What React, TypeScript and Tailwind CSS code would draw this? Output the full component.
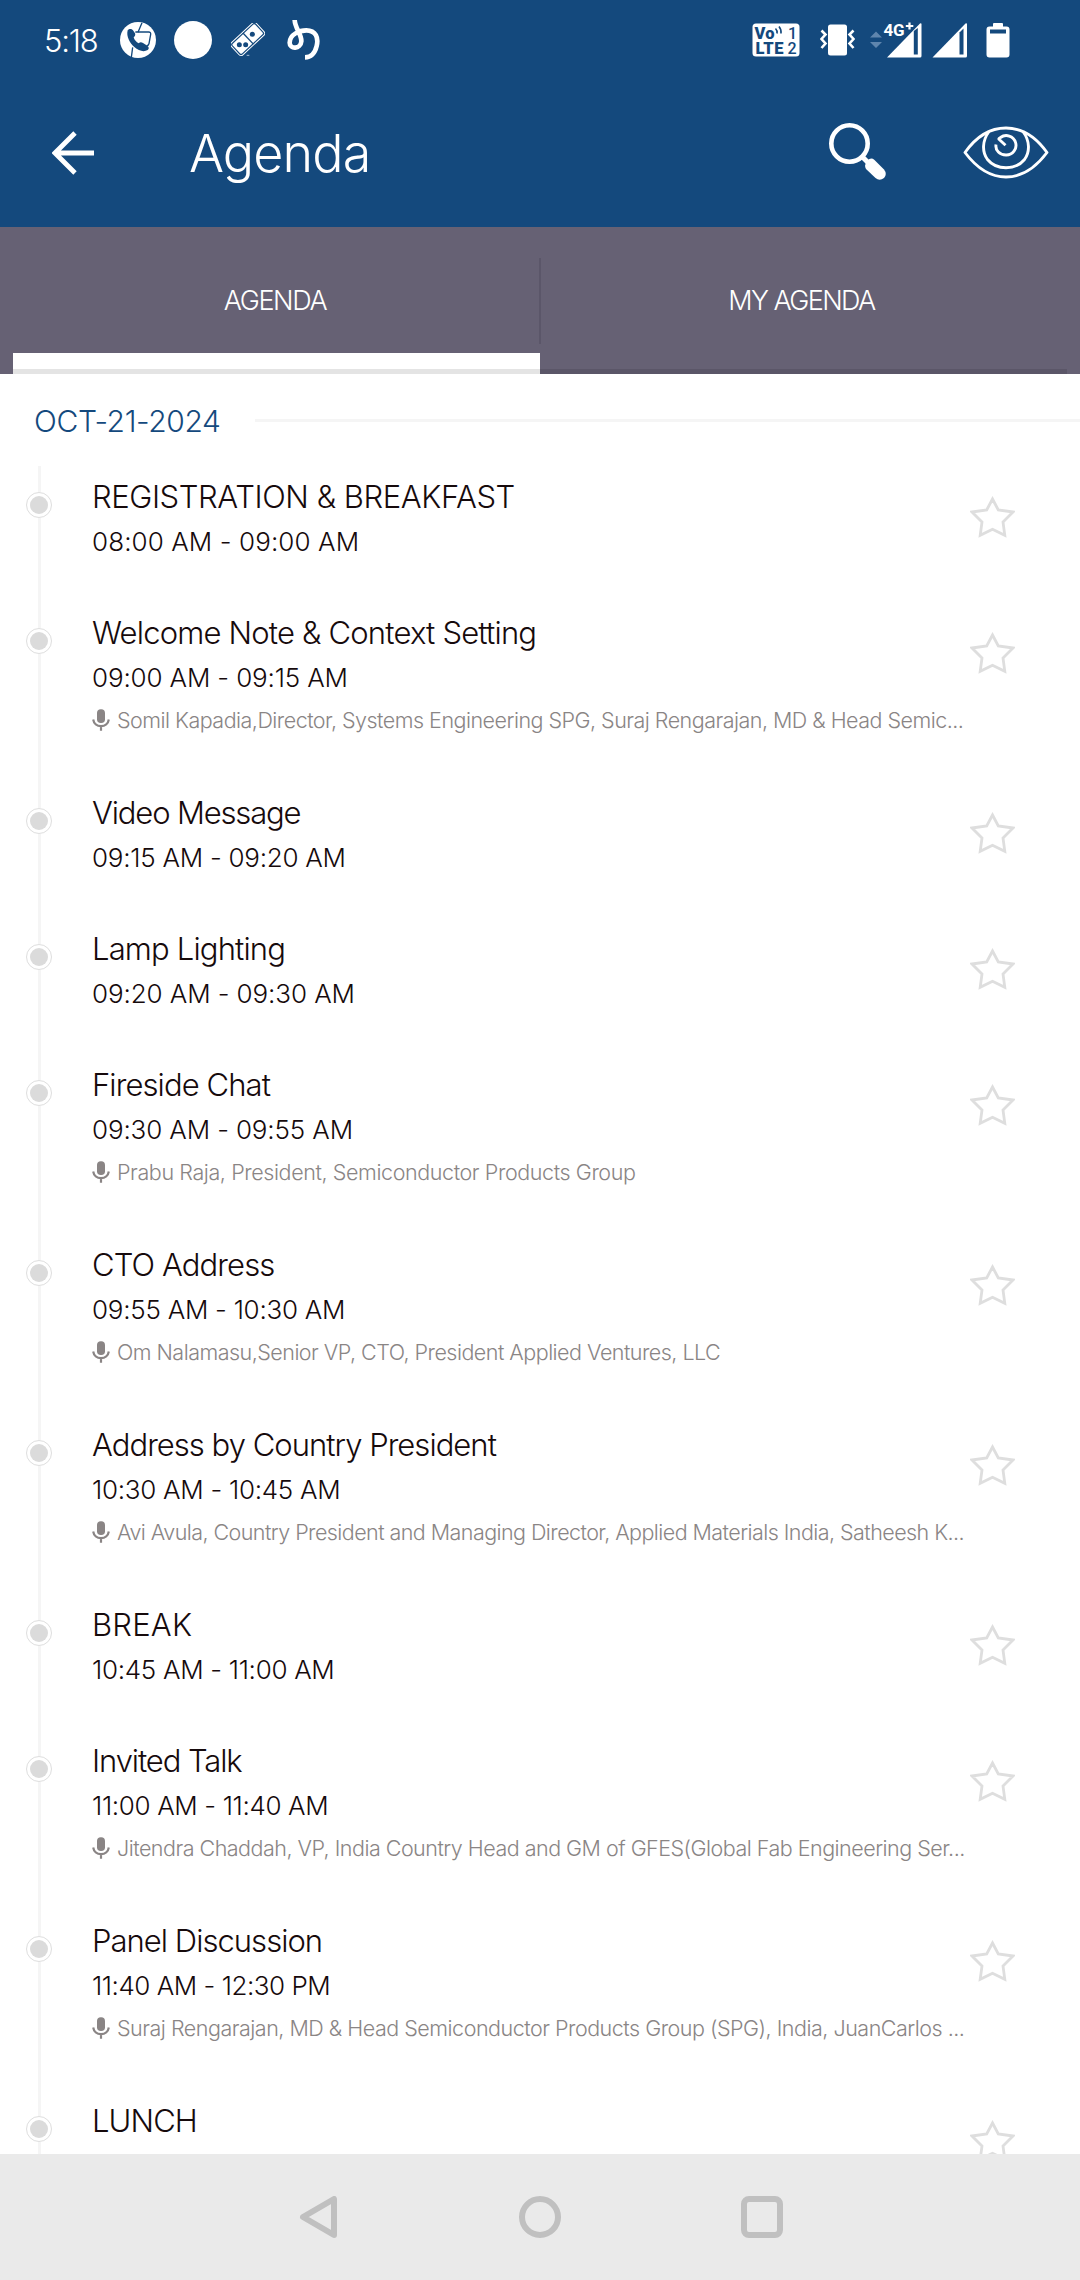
type Session = {
  title: string;
  titleTracking: string;
  time?: string;
  timeTracking?: string;
  speakers?: string;
  speakersTracking?: string;
};

const sessions: Session[] = [
  { title: 'REGISTRATION & BREAKFAST', titleTracking: 'tracking-[-0.42px]', time: '08:00 AM - 09:00 AM', timeTracking: 'tracking-[0.09px]' },
  {
    title: 'Welcome Note & Context Setting',
    titleTracking: 'tracking-[-0.81px]',
    time: '09:00 AM - 09:15 AM',
    timeTracking: 'tracking-[-0.15px]',
    speakers: 'Somil Kapadia,Director, Systems Engineering SPG, Suraj Rengarajan, MD & Head Semic...',
    speakersTracking: 'tracking-[-0.52px]',
  },
  { title: 'Video Message', titleTracking: 'tracking-[-1.15px]', time: '09:15 AM - 09:20 AM', timeTracking: 'tracking-[-0.26px]' },
  { title: 'Lamp Lighting', titleTracking: 'tracking-[-0.84px]', time: '09:20 AM - 09:30 AM', timeTracking: 'tracking-[-0.1px]' },
  {
    title: 'Fireside Chat',
    titleTracking: 'tracking-[-0.9px]',
    time: '09:30 AM - 09:55 AM',
    timeTracking: 'tracking-[-0.14px]',
    speakers: 'Prabu Raja, President, Semiconductor Products Group',
    speakersTracking: 'tracking-[-0.4px]',
  },
  {
    title: 'CTO Address',
    titleTracking: 'tracking-[-0.9px]',
    time: '09:55 AM - 10:30 AM',
    timeTracking: 'tracking-[-0.26px]',
    speakers: 'Om Nalamasu,Senior VP, CTO, President Applied Ventures, LLC',
    speakersTracking: 'tracking-[-0.52px]',
  },
  {
    title: 'Address by Country President',
    titleTracking: 'tracking-[-0.97px]',
    time: '10:30 AM - 10:45 AM',
    timeTracking: 'tracking-[-0.28px]',
    speakers: 'Avi Avula, Country President and Managing Director, Applied Materials India, Satheesh K...',
    speakersTracking: 'tracking-[-0.56px]',
  },
  { title: 'BREAK', titleTracking: 'tracking-[0.2px]', time: '10:45 AM - 11:00 AM', timeTracking: 'tracking-[-0.3px]' },
  {
    title: 'Invited Talk',
    titleTracking: 'tracking-[-1.1px]',
    time: '11:00 AM - 11:40 AM',
    timeTracking: 'tracking-[-0.35px]',
    speakers: 'Jitendra Chaddah, VP, India Country Head and GM of GFES(Global Fab Engineering Ser...',
    speakersTracking: 'tracking-[-0.51px]',
  },
  {
    title: 'Panel Discussion',
    titleTracking: 'tracking-[-0.97px]',
    time: '11:40 AM - 12:30 PM',
    timeTracking: 'tracking-[-0.47px]',
    speakers: 'Suraj Rengarajan, MD & Head Semiconductor Products Group (SPG), India, JuanCarlos ...',
    speakersTracking: 'tracking-[-0.49px]',
  },
  { title: 'LUNCH', titleTracking: 'tracking-[-0.9px]' },
];

function PhoneIcon() {
  return (
    <svg className="ml-6 h-9 w-9 shrink-0" viewBox="0 0 108 108">
      <circle cx="54" cy="54" r="54" fill="#fff" />
      <path d="M66 2 54 31M34 106 38 76" stroke="#14497d" strokeWidth="4" fill="none" />
      <path d="M46 30h40q7 0 6 7l-5 28q-1 6-7 6" stroke="#14497d" strokeWidth="4" fill="none" />
      <path
        d="M23 25c5-6 13-5 17 1l5 8c2 5 0 9-4 12 2 8 8 14 15 18 4-4 8-4 13-1l13 8c5 4 6 9 1 13-11 7-27 3-40-9C30 64 18 44 23 25Z"
        fill="#14497d"
      />
    </svg>
  );
}

function DominoIcon() {
  return (
    <svg className="ml-[19px] h-[34px] w-[34px] shrink-0" viewBox="0 0 102 102">
      <g transform="rotate(-43 50 48)">
        <rect x="-1" y="23" width="102" height="50" rx="8" fill="none" stroke="#fff" strokeWidth="3" />
        <rect x="4" y="28" width="92" height="40" rx="4" fill="#fff" />
        <path d="M52 25v46" stroke="#14497d" strokeWidth="4" />
      </g>
      <circle cx="64" cy="34" r="7.500" fill="#14497d" />
      <circle cx="25" cy="65" r="7.500" fill="#14497d" />
      <circle cx="44" cy="65" r="7.500" fill="#14497d" />
      <path d="M47 97h8" stroke="#a5bdd6" strokeWidth="3" />
    </svg>
  );
}

function LoopIcon() {
  return (
    <svg className="ml-[22px] h-10 w-[33px] shrink-0" viewBox="0 0 99 120" fill="none" stroke="#fff" strokeWidth="14">
      <path d="M23 0C24 26 44 42 43 64C41 88 8 89 8 68C8 43 38 31 58 31C87 31 95 54 89 78C84 99 74 112 54 112" />
    </svg>
  );
}

function VolteIcon() {
  return (
    <svg className="h-[34px] w-12 shrink-0" viewBox="0 0 48 34">
      <rect x="0.5" y="0.5" width="47" height="33" rx="3.5" fill="#fff" />
      <g fill="#14497d" fontFamily="Roboto, sans-serif">
        <text x="2.5" y="15.5" fontSize="16.5" fontWeight="900" textLength="20">Vo</text>
        <text x="3.5" y="30.5" fontSize="16.5" fontWeight="900" textLength="28">LTE</text>
        <text x="36" y="15.5" fontSize="16" fontWeight="500">1</text>
        <text x="35.5" y="30.5" fontSize="16" fontWeight="500">2</text>
      </g>
      <path d="M23.500 5.500q2 2 1.500 5M27 3.500q2.500 3 2 7" stroke="#14497d" strokeWidth="1.600" fill="none" />
    </svg>
  );
}

function VibrateIcon() {
  return (
    <svg className="ml-[20px] h-8 w-[35px] shrink-0" viewBox="0 0 35 32">
      <rect x="8" y="0.500" width="19" height="31" rx="2.500" fill="#fff" />
      <path d="M1.500 6.500l4 4-4 4.500 4 4.500-4 4.500M33.500 6.500l-4 4 4 4.500-4 4.500 4 4.500" fill="none" stroke="#fff" strokeWidth="2.600" />
    </svg>
  );
}

function SignalDataIcon() {
  return (
    <svg className="ml-[14px] h-10 w-[53px] shrink-0" viewBox="0 -2 53 40">
      <path d="M1 15.500 7 9.500 13 15.500ZM1 20h12l-6 6Z" fill="#5f85ad" />
      <path d="M18 35.500 51 1.500q1.500-1 1.500 1v31.500q0 1.500-1.500 1.500Z" fill="#fff" />
      <path d="M44.800 9v23.500h4V6Z" fill="#14497d" />
      <path d="M13 0h31v8l-8 6.500H13Z" fill="#14497d" />
      <text x="14.500" y="14" fontSize="17" fontWeight="700" fill="#fff" fontFamily="Roboto, sans-serif" textLength="21">4G</text>
      <path d="M40.500 0.500v7M36.800 4h7.500" stroke="#fff" strokeWidth="2.200" />
    </svg>
  );
}

function SignalIcon() {
  return (
    <svg className="ml-[10px] h-9 w-[36px] shrink-0" viewBox="0 0 36 36">
      <path d="M0.500 35.500 33.500 1.500q1.500-1 1.500 1v31.500q0 1.500-1.500 1.500Z" fill="#fff" />
      <path d="M27.500 10.500v22h4V6.500Z" fill="#14497d" />
    </svg>
  );
}

function BatteryIcon() {
  return (
    <svg className="ml-[18px] h-9 w-6 shrink-0" viewBox="0 0 24 36">
      <path d="M8 1h8q1 0 1 1v2.500h3.500q3 0 3 3v25q0 3-3 3h-17q-3 0-3-3v-25q0-3 3-3H7V2q0-1 1-1Z" fill="#fff" />
      <path d="M4 7.500h16v4H4Z" fill="#14497d" />
    </svg>
  );
}

function BackArrowIcon() {
  return (
    <svg className="-mt-px h-11 w-[43px] shrink-0" viewBox="0 0 43 44" fill="none" stroke="#fff" strokeWidth="4.800">
      <path d="M23 2 3 22 23 42M3.500 22H42" />
    </svg>
  );
}

function SearchIcon() {
  return (
    <svg className="h-[58px] w-[58px] shrink-0" viewBox="0 0 58 58">
      <circle cx="20.500" cy="20.500" r="18.200" fill="none" stroke="#fff" strokeWidth="4.600" />
      <path d="M33 33.500 42 42.500" stroke="#fff" strokeWidth="5" />
      <path d="M38.500 37.500q3.500-3.500 7-0.500l9.500 9.500q3.500 4.500 0 8.500-4.500 3.500-8.500 0L37 46q-2.500-4 1.500-8.500Z" fill="#fff" />
    </svg>
  );
}

function EyeIcon() {
  return (
    <svg className="ml-[76px] h-[54px] w-[86px] shrink-0" viewBox="0 0 86 54" fill="none" stroke="#fff" strokeWidth="2.900" strokeLinejoin="round">
      <path d="M2 27.500C14 10.500 27 3 43 3s29 7.500 41 24.500C72 43.500 59 52 43 52S14 43.500 2 27.500Z" />
      <path d="M26 6.500C19 16 19 27 24.500 34.500c9 11 28 11 37 0C67 27 67 16 60 6.500" />
      <path d="M33 19.500c-1 6 4 10.500 10 10.500a9.700 9.700 0 1 0-5.500-17.500q-2 1.200-1.500 1.800l6.500 6" />
    </svg>
  );
}

function StarIcon() {
  return (
    <svg className="mt-[30px] h-[42px] w-[45px] shrink-0" viewBox="0 0 45 42" fill="none" stroke="#dedede" strokeWidth="2.800">
      <path d="M22.500 3 28.300 14 43 16 33 26 34.800 39.300 22.500 33.200 10.200 39.300 12 26 2 16 16.700 14Z" />
    </svg>
  );
}

function MicIcon() {
  return (
    <svg className="h-[22px] w-[18px] shrink-0" viewBox="0 0 18 22">
      <rect x="5" y="0.300" width="8" height="13.700" rx="3.800" fill="#8a8585" />
      <path d="M1.200 10.500c0.600 4.200 3.800 6.700 7.800 6.700s7.200-2.500 7.800-6.700M9 17v4.700" fill="none" stroke="#8a8585" strokeWidth="2.200" />
    </svg>
  );
}

function StatusBar() {
  return (
    <div className="flex h-20 items-center pl-11 pr-[70px]">
      <span className="w-[52px] whitespace-nowrap pt-0.5 text-[31px] leading-10 tracking-[-1.2px]">5:18</span>
      <PhoneIcon />
      <span className="ml-[18px] h-[38px] w-[38px] shrink-0 rounded-full bg-white" />
      <DominoIcon />
      <LoopIcon />
      <div className="ml-auto flex items-center">
        <VolteIcon />
        <VibrateIcon />
        <SignalDataIcon />
        <SignalIcon />
        <BatteryIcon />
      </div>
    </div>
  );
}

function SessionRow({ session }: { session: Session }) {
  return (
    <li className={session.speakers ? 'flex h-[180px] shrink-0' : 'flex h-[136px] shrink-0'}>
      <div className="flex w-[78px] shrink-0 flex-col items-center">
        <span className="h-[26px] w-[3px] bg-[#f5f5f5]" />
        <span className="flex h-[26px] w-[26px] shrink-0 items-center justify-center rounded-full border border-[#dedede]">
          <span className="h-[18px] w-[18px] rounded-full bg-[#dbdbdb]" />
        </span>
        <span className="w-[3px] flex-1 bg-[#f5f5f5]" />
      </div>
      <div className="ml-3.5 w-[878px] shrink-0 whitespace-nowrap pt-[9px] text-[#160a0c]">
        <h2 className={`text-[31px] leading-[44px] ${session.titleTracking}`}>{session.title}</h2>
        {session.time && <p className={`mt-[3px] text-[26px] leading-10 ${session.timeTracking}`}>{session.time}</p>}
        {session.speakers && (
          <p className="mt-1.5 flex h-8 items-center text-[#8a8585]">
            <MicIcon />
            <span className={`ml-[7px] text-[21.5px] leading-8 ${session.speakersTracking}`}>{session.speakers}</span>
          </p>
        )}
      </div>
      <StarIcon />
    </li>
  );
}

export default function App() {
  return (
    <div className="flex h-[2280px] w-[1080px] flex-col overflow-hidden bg-white font-[Inter,sans-serif] font-light">
      <header className="h-[227px] shrink-0 bg-[#14497d] text-white">
        <StatusBar />
        <div className="flex h-[147px] items-center pl-[52px] pr-[31px]">
          <BackArrowIcon />
          <h1 className="ml-[94px] text-[52px] leading-[64px] tracking-[-0.9px]">Agenda</h1>
          <div className="ml-auto flex items-center pb-[3px]">
            <SearchIcon />
            <EyeIcon />
          </div>
        </div>
      </header>

      <nav className="flex h-[147px] shrink-0 bg-[#666174] px-[13px] text-[27px] leading-10 text-white">
        <div className="flex w-[527px] flex-col">
          <div className="flex h-[126px] items-center justify-center pr-[3px] pt-[21px]">
            <span className="tracking-[-1.37px]">AGENDA</span>
          </div>
          <div className="h-4 bg-white" />
          <div className="h-[5px] bg-[#e4e4e4]" />
        </div>
        <div className="-ml-px flex w-[528px] flex-col">
          <div className="mt-[31px] flex h-[86px] items-center justify-center border-l-2 border-[#5b5669] pr-[5px]">
            <span className="tracking-[-1.59px]">MY AGENDA</span>
          </div>
          <div className="ml-px mt-auto h-[5px] bg-[#5b5668]" />
        </div>
      </nav>

      <main className="flex h-[1780px] shrink-0 flex-col overflow-hidden">
        <div className="flex h-[92px] shrink-0 items-center pl-[34px]">
          <span className="w-[221px] whitespace-nowrap pt-0.5 text-[30px] leading-10 tracking-[-0.36px] text-[#14497d]">OCT-21-2024</span>
          <span className="h-[3px] flex-1 bg-[#f5f5f5]" />
        </div>
        <ul className="flex flex-col">
          {sessions.map((session) => (
            <SessionRow key={session.title} session={session} />
          ))}
        </ul>
      </main>

      <footer className="flex h-[126px] shrink-0 items-center justify-center gap-[180px] bg-[#eaeaea]">
        <svg className="h-[42px] w-[42px]" viewBox="0 0 42 42" fill="none" stroke="#c0c0c0" strokeWidth="6" strokeLinejoin="round">
          <path d="M37 3V39L6 21Z" />
        </svg>
        <span className="h-[42px] w-[42px] rounded-full border-6 border-[#c0c0c0]" />
        <span className="h-[42px] w-[42px] rounded-lg border-6 border-[#c0c0c0]" />
      </footer>
    </div>
  );
}
